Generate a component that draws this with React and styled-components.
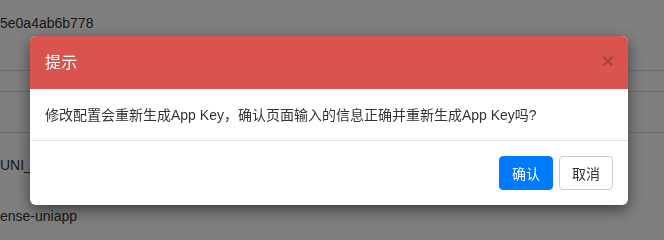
import React from 'react';
import styled, { createGlobalStyle } from 'styled-components';

const GlobalStyle = createGlobalStyle`
  html, body {
    margin: 0;
    padding: 0;
    width: 664px;
    height: 240px;
    overflow: hidden;
    background: #fff;
    font-family: "Liberation Sans", "Noto Sans CJK SC", sans-serif;
    color: #333;
  }
`;

const Page = styled.div`
  width: 664px;
  height: 240px;
  font-size: 14px;
`;

const Row = styled.div`
  height: ${p => p.h}px;
  padding-top: ${p => p.pt || 0}px;
  box-sizing: border-box;
  border-bottom: ${p => (p.line ? '1px solid #ddd' : 'none')};
  line-height: 20px;
  white-space: nowrap;
`;

const Backdrop = styled.div`
  position: fixed;
  inset: 0;
  background: rgba(0, 0, 0, 0.5);
`;

const Dialog = styled.div`
  position: fixed;
  left: 30px;
  top: 36px;
  width: 598px;
  background: #fff;
  border-radius: 6px;
  overflow: hidden;
  box-shadow: 0 5px 15px rgba(0, 0, 0, 0.5);
  font-size: 14px;
`;

const Header = styled.div`
  display: flex;
  align-items: center;
  justify-content: space-between;
  height: 53px;
  padding: 0 15px;
  background: #d9534f;
  color: #fff;
`;

const Title = styled.h4`
  margin: 0;
  font-size: 16px;
  font-weight: normal;
  line-height: 22px;
  letter-spacing: 0.3px;
`;

const Close = styled.button`
  border: 0;
  background: transparent;
  padding: 0;
  font-family: "Liberation Sans", sans-serif;
  font-size: 21px;
  font-weight: bold;
  line-height: 1;
  color: #000;
  opacity: 0.2;
  margin-right: -1px;
  margin-top: -4px;
`;

const Body = styled.div`
  padding: 15px;
  height: 52px;
  box-sizing: border-box;
  line-height: 22px;
  color: #333;
  border-bottom: 1px solid #e5e5e5;
`;

const Footer = styled.div`
  display: flex;
  justify-content: flex-end;
  gap: 6px;
  padding: 15px;
`;

const Button = styled.button`
  height: 34px;
  padding: 0 12px;
  font-family: "Liberation Sans", "Noto Sans CJK SC", sans-serif;
  font-size: 14px;
  border-radius: 4px;
  border: 1px solid ${p => (p.primary ? '#007bff' : '#ccc')};
  background: ${p => (p.primary ? '#007bff' : '#fff')};
  color: ${p => (p.primary ? '#fff' : '#333')};
`;

export default function App() {
  return (
    <>
      <GlobalStyle />
      <Page>
        <Row h={71} pt={13} line>5e0a4ab6b778</Row>
        <Row h={21} line />
        <Row h={41} line />
        <Row h={60} pt={22}>UNI__________________</Row>
        <Row h={40} pt={13}>ense-uniapp</Row>
      </Page>
      <Backdrop />
      <Dialog>
        <Header>
          <Title>提示</Title>
          <Close>×</Close>
        </Header>
        <Body>修改配置会重新生成App Key，确认页面输入的信息正确并重新生成App Key吗?</Body>
        <Footer>
          <Button primary>确认</Button>
          <Button>取消</Button>
        </Footer>
      </Dialog>
    </>
  );
}
